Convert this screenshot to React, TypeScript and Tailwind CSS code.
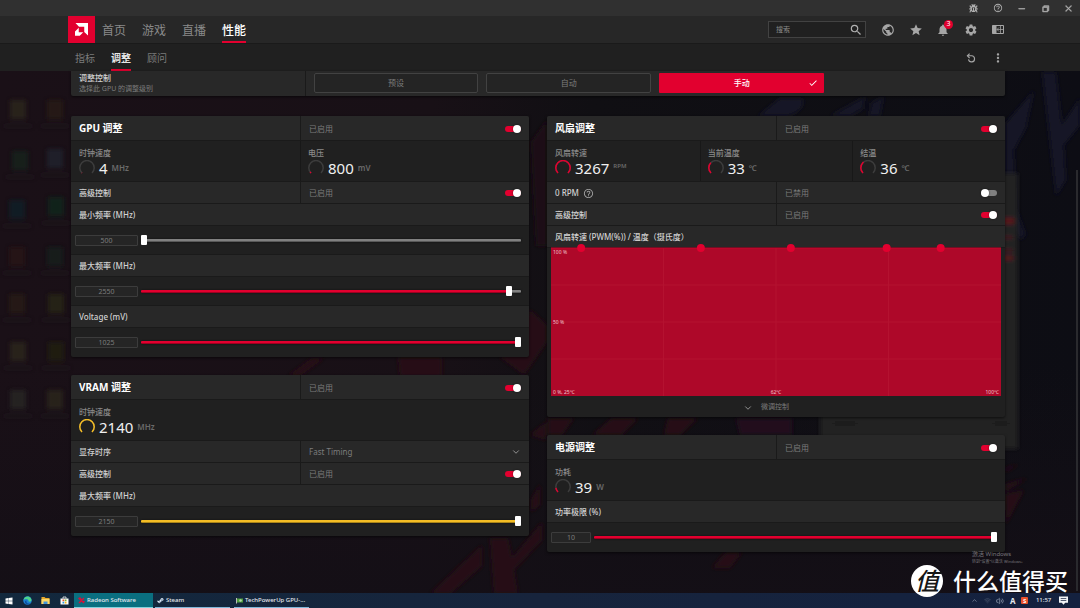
import React, { ReactNode } from "react";
import {
  MdCheck,
  MdHelpOutline,
  MdMoreVert,
  MdNotifications,
  MdPublic,
  MdSearch,
  MdSettings,
  MdStar,
} from "react-icons/md";
import { FaSteamSymbol, FaWindows } from "react-icons/fa";
import {
  VscChromeClose,
  VscChromeMinimize,
  VscChromeRestore,
} from "react-icons/vsc";
import { Bug, ChevronDown, ChevronUp, Volume2, Wifi } from "lucide-react";

const RED = "#e2002f";
const YELLOW = "#f4bd25";

const navItems = ["首页", "游戏", "直播", "性能"];
const subItems = ["指标", "调整", "顾问"];

// share of the chart's width, all points sit at 100 %
const curvePoints = [6.7, 33.3, 53.3, 74.6, 86.6];

const desktopIcons = [
  { x: 10, y: 100, fill: "#2d2a1c" },
  { x: 47, y: 100, fill: "#2c1d16" },
  { x: 12, y: 151, fill: "#12281c" },
  { x: 47, y: 149, fill: "#232630" },
  { x: 9, y: 200, fill: "#10202c" },
  { x: 48, y: 197, fill: "#102c1a" },
  { x: 9, y: 247, fill: "#2c1614" },
  { x: 47, y: 247, fill: "#16201f" },
  { x: 9, y: 294, fill: "#2b1d14" },
  { x: 48, y: 294, fill: "#2b2914" },
  { x: 10, y: 342, fill: "#2d2a1f" },
  { x: 48, y: 342, fill: "#242210" },
  { x: 10, y: 390, fill: "#2b2b26" },
  { x: 47, y: 390, fill: "#2e2a1e" },
];

function Wallpaper() {
  return (
    <svg
      className="absolute inset-0 -z-10 h-full w-full"
      viewBox="0 0 1080 608"
      preserveAspectRatio="none"
      aria-hidden="true"
    >
      <defs>
        <linearGradient id="wall" x1="0" y1="0" x2="1" y2="0">
          <stop offset="0" stopColor="#1a1017" />
          <stop offset="0.4" stopColor="#181016" />
          <stop offset="0.55" stopColor="#100f13" />
          <stop offset="1" stopColor="#0d0d14" />
        </linearGradient>
        <linearGradient id="wallFade" x1="0" y1="0" x2="0" y2="1">
          <stop offset="0.6" stopColor="#140f16" stopOpacity="0" />
          <stop offset="1" stopColor="#140f16" />
        </linearGradient>
        <filter id="soft" x="-20%" y="-20%" width="140%" height="140%">
          <feGaussianBlur stdDeviation="2" />
        </filter>
      </defs>
      <rect width="1080" height="608" fill="url(#wall)" />
      <rect width="1080" height="608" fill="url(#wallFade)" />
      <g filter="url(#soft)">
        <g fill="#131426">
          <path d="M1042 72 1056 72 1062 125 1080 98 1080 125 1064 145 1066 180 1056 196Z" />
          <path d="M1034 90 1026 128 1014 150 1016 208 1026 235 1020 240 1005 215V124Z" />
          <path d="M780 98h22c4 8-4 16-16 18h-28Z" />
          <path d="M830 116 866 96 862 108 884 96 880 116H868L872 104 850 116Z" />
        </g>
        <g fill="#280f19">
          <path d="M398 357h44v20h-42Z" />
          <path d="M500 357 530 310 547 325V342L524 375Z" />
          <path d="M288 376 312 358h12l-24 18Z" />
          <path d="M530 435 546 422V440Z" />
          <path d="M531 500 540 484V505L531 512Z" />
          <path d="M430 594 482 545V566L450 594Z" />
          <path d="M490 538h18l4 20 30-36v18l-28 30 4 24h-24Z" />
          <path d="M548 418 574 418 562 435H548Z" />
          <path d="M592 435 612 418H638L622 435Z" />
          <path d="M668 418H698L680 435H664Z" />
          <path d="M712 568 726 552H742L730 568Z" />
          <path d="M1005 468 1020 464 1005 472ZM1005 484 1028 478 1005 492ZM1005 494 1024 490 1006 524Z" />
        </g>
        <path d="M736 418h56v17h-52Z" fill="#22101f" />
        <path d="M531 142 547 120V246H536Z" fill="#1d0f19" />
      </g>
      <g filter="url(#soft)">
        <rect x="820" y="173" width="198" height="276" fill="#212122" />
        <rect x="1002" y="218" width="12" height="6" fill="#5a161f" />
        <rect x="1002" y="236" width="11" height="3" fill="#45161d" />
        <rect x="1002" y="249" width="11" height="3" fill="#45161d" />
        <rect x="1002" y="256" width="11" height="4" fill="#5a161f" />
        <rect x="834" y="422" width="22" height="3" fill="#161617" />
        <rect x="994" y="422" width="14" height="3" fill="#161617" />
      </g>
      <g filter="url(#soft)" opacity="0.7">
        {desktopIcons.map((d) => (
          <g key={`${d.x}-${d.y}`}>
            <rect x={d.x} y={d.y} width="16" height="19" fill={d.fill} />
            <rect x={d.x - 6} y={d.y + 25} width="28" height="2" fill="#211a20" />
          </g>
        ))}
      </g>
    </svg>
  );
}

function RadeonLogo() {
  return (
    <span className="flex size-[27px] items-center justify-center bg-[#e2002f]">
      <svg className="size-[13px]" viewBox="0 0 26 26" fill="#fff" role="img" aria-label="AMD">
        <path d="M1 0H26V25L18.5 18V7.5H8Z" />
        <path d="M7.5 9.5V18.5H16.5L9.5 25.5H0V17Z" />
      </svg>
    </span>
  );
}

function PanelIcon() {
  return (
    <svg className="h-[9px] w-[12px]" viewBox="0 0 24 18" aria-hidden="true">
      <path d="M1 1h22v16H1z" fill="none" stroke="#a6a6a6" strokeWidth="2" />
      <path d="M1 1h8v16H1z" fill="#a6a6a6" />
      <path d="M10 9h12M14 5l-4 4 4 4M17 2v14" fill="none" stroke="#a6a6a6" strokeWidth="1.500" />
    </svg>
  );
}

function ResetIcon() {
  return (
    <svg className="size-2.5" viewBox="0 0 18 18" fill="none" stroke="#a6a6a6" strokeWidth="2" aria-hidden="true">
      <path d="M3 5h7a5.500 5.500 0 1 1-5.500 6.500" />
      <path d="M6.500 1 2.500 5l4 4" />
    </svg>
  );
}

function WindowBar() {
  return (
    <div className="flex h-4 items-center justify-end bg-[#303030] pr-[7px]">
      <div className="flex w-[104px] items-center justify-between text-[#b0b0b0]">
        <button aria-label="报告问题">
          <Bug className="size-[9px]" strokeWidth={3} />
        </button>
        <button aria-label="帮助">
          <MdHelpOutline className="size-[10px]" />
        </button>
        <button aria-label="最小化">
          <VscChromeMinimize className="size-[9px]" strokeWidth={1} />
        </button>
        <button aria-label="还原">
          <VscChromeRestore className="size-[9px]" strokeWidth={1} />
        </button>
        <button aria-label="关闭">
          <VscChromeClose className="size-[9px]" strokeWidth={1} />
        </button>
      </div>
    </div>
  );
}

function Header() {
  return (
    <header className="flex h-[27px] items-center bg-[#272727] pr-[75px] pl-[68px]">
      <RadeonLogo />
      <nav className="ml-[7px] flex h-full flex-1 gap-4 text-[12px]">
        {navItems.map((item) => (
          <a
            key={item}
            href="#"
            className={
              item === "性能"
                ? "flex items-center border-b-2 border-[#e2002f] pt-1 font-medium text-white"
                : "flex items-center border-b-2 border-transparent pt-1 text-[#8a8a8a]"
            }
          >
            {item}
          </a>
        ))}
      </nav>
      <label className="mr-[15px] flex h-[17px] w-[98px] items-center border border-[#424242] bg-[#202020] pr-0.5 pl-[7px]">
        <input
          type="text"
          aria-label="搜索"
          placeholder="搜索"
          className="w-full min-w-0 bg-transparent pt-0.5 text-[7px] outline-none placeholder:text-[#8a8a8a]"
        />
        <MdSearch className="size-3.5 shrink-0 text-[#b0b0b0]" />
      </label>
      <div className="flex w-[124px] items-center justify-between text-[#a6a6a6]">
        <button aria-label="网络">
          <MdPublic className="size-3.5" />
        </button>
        <button aria-label="收藏">
          <MdStar className="size-3.5" />
        </button>
        <button aria-label="通知" className="relative">
          <MdNotifications className="size-3.5" />
          <span className="absolute -top-[3px] -right-[3px] flex size-[9px] items-center justify-center rounded-full bg-[#e2002f] text-[7px] text-white">
            3
          </span>
        </button>
        <button aria-label="设置">
          <MdSettings className="size-3.5" />
        </button>
        <button aria-label="侧栏" className="flex w-3.5 justify-center">
          <PanelIcon />
        </button>
      </div>
    </header>
  );
}

function SubHeader() {
  return (
    <div className="flex h-7 items-center border-t border-[#1a1a1a] bg-[#202020] pr-[75px] pl-[75px]">
      <nav className="flex h-full flex-1 gap-4 text-[10px]">
        {subItems.map((item) => (
          <a
            key={item}
            href="#"
            className={
              item === "调整"
                ? "flex items-center border-b-2 border-[#e2002f] pt-1 font-bold text-[#e6e6e6]"
                : "flex items-center border-b-2 border-transparent pt-1 text-[#7c7c7c]"
            }
          >
            {item}
          </a>
        ))}
      </nav>
      <div className="flex items-center gap-[15px] text-[#a6a6a6]">
        <button aria-label="重置">
          <ResetIcon />
        </button>
        <button aria-label="更多">
          <MdMoreVert className="size-3.5" />
        </button>
      </div>
    </div>
  );
}

function Card({ children }: { children: ReactNode }) {
  return (
    <section className="overflow-hidden rounded-xs bg-[#202020] shadow-[0_1px_3px_rgba(0,0,0,0.6)]">
      {children}
    </section>
  );
}

function Toggle({ label, on = true }: { label: string; on?: boolean }) {
  return (
    <input
      type="checkbox"
      aria-label={label}
      defaultChecked={on}
      className="flex h-1.5 w-4 appearance-none items-center rounded-full bg-[#808080] before:size-2 before:shrink-0 before:rounded-full before:bg-white before:shadow-[0_0_2px_rgba(0,0,0,0.6)] before:content-[''] checked:justify-end checked:bg-[#e2002f]"
    />
  );
}

function CardHeader({ title }: { title: string }) {
  return (
    <div className="grid h-[25px] grid-cols-2 border-b border-[#1a1a1a] bg-[#282828]">
      <h2 className="flex items-center px-2 pt-px text-[10px] font-bold text-white">{title}</h2>
      <div className="flex items-center justify-between border-l border-[#1a1a1a] px-2 pt-px">
        <span className="text-[8px] text-[#7c7c7c]">已启用</span>
        <Toggle label={title} />
      </div>
    </div>
  );
}

function Row({ label, help, children }: { label: string; help?: boolean; children?: ReactNode }) {
  return (
    <div className="grid h-[22px] grid-cols-2 border-b border-[#1a1a1a] bg-[#282828] text-[8px]">
      <div className="flex items-center gap-1 px-2 pt-px font-medium whitespace-nowrap text-[#d2d2d2]">
        {label}
        {help && <MdHelpOutline className="size-[11px] text-[#a0a0a0]" />}
      </div>
      {children && (
        <div className="flex items-center justify-between border-l border-[#1a1a1a] px-2 pt-px text-[#7c7c7c]">
          {children}
        </div>
      )}
    </div>
  );
}

function SwitchRow({ label, on = true, help }: { label: string; on?: boolean; help?: boolean }) {
  return (
    <Row label={label} help={help}>
      <span>{on ? "已启用" : "已禁用"}</span>
      <Toggle label={label} on={on} />
    </Row>
  );
}

interface StatProps {
  label: string;
  value: number;
  unit: string;
  fill: number;
  color?: string;
  smallUnit?: boolean;
}

function Stat({ label, value, unit, fill, color = RED, smallUnit }: StatProps) {
  const arc = "M3 13A7.200 7.200 0 1 1 13 13";
  return (
    <div className="flex flex-col border-l border-[#181818] px-[7px] pt-[7px] first:border-transparent">
      <span className="text-[8px] leading-[10px] font-medium text-[#8a8a8a]">{label}</span>
      <div className="flex items-center gap-1">
        <svg className="size-4" viewBox="0 0 16 16" fill="none" strokeWidth="1.5" aria-hidden="true">
          <path d={arc} stroke="#3c3c3c" />
          <path d={arc} stroke={color} pathLength={100} strokeDasharray={`${fill} 200`} />
        </svg>
        <span className="text-[15px] leading-5 text-[#f0f0f0]">{value}</span>
        <span
          className={
            smallUnit
              ? "pb-1 text-[6px] font-semibold text-[#6a6a6a]"
              : "text-[8px] font-semibold text-[#6a6a6a]"
          }
        >
          {unit}
        </span>
      </div>
    </div>
  );
}

interface SliderProps {
  label: string;
  min: number;
  max: number;
  value: number;
  color?: string;
  narrow?: boolean;
}

function SliderRow({ label, min, max, value, color = RED, narrow }: SliderProps) {
  const fill = ((value - min) / (max - min)) * 100;
  return (
    <>
      <Row label={label} />
      <div className="flex h-[29px] items-center gap-[3px] border-b border-[#1a1a1a] pt-px pr-2 pl-1 last:border-transparent">
        <input
          type="text"
          aria-label={label}
          defaultValue={value}
          className={
            narrow
              ? "h-[11px] w-10 rounded-[1px] border border-[#3c3c3c] bg-[#252525] text-center text-[7px] text-[#7c7c7c]"
              : "h-[11px] w-[63px] rounded-[1px] border border-[#3c3c3c] bg-[#252525] text-center text-[7px] text-[#7c7c7c]"
          }
        />
        <input
          type="range"
          aria-label={label}
          min={min}
          max={max}
          defaultValue={value}
          style={{
            backgroundImage: `linear-gradient(to right, ${color} ${fill}%, #808080 ${fill}%)`,
          }}
          className="h-[3px] min-w-0 flex-1 appearance-none rounded-[1px] border-b border-black/30 shadow-[0_0_2px_rgba(0,0,0,0.7)] [&::-webkit-slider-thumb]:h-2.5 [&::-webkit-slider-thumb]:w-1.5 [&::-webkit-slider-thumb]:appearance-none [&::-webkit-slider-thumb]:rounded-[1px] [&::-webkit-slider-thumb]:bg-white"
        />
      </div>
    </>
  );
}

function FanCurve() {
  return (
    <div className="relative mx-1 flex h-[148px] flex-col justify-between bg-[#ae0829] px-0.5 pt-px text-[5px] leading-[7px] text-[#efc4cc]">
      <svg className="absolute inset-0 h-full w-full overflow-visible" aria-hidden="true">
        {["25%", "50%", "75%"].map((p) => (
          <g key={p} stroke="#b41230" strokeWidth="1">
            <line x1={p} x2={p} y1="0" y2="100%" />
            <line x1="0" x2="100%" y1={p} y2={p} />
          </g>
        ))}
        <line x1="0" x2="100%" y1="0" y2="0" stroke="#c8052c" />
        {curvePoints.map((x) => (
          <circle key={x} cx={`${x}%`} cy="0" r="4" fill={RED} />
        ))}
      </svg>
      <span className="relative">100 %</span>
      <span className="relative">50 %</span>
      <div className="relative grid grid-cols-3">
        <span>0 %, 25℃</span>
        <span className="text-center">62℃</span>
        <span className="text-right">100℃</span>
      </div>
    </div>
  );
}

function TuningControl() {
  return (
    <section className="grid h-[25px] grid-cols-4 rounded-b-xs bg-[#282828] shadow-[0_1px_3px_rgba(0,0,0,0.6)]">
      <div className="flex flex-col px-2 pt-px">
        <span className="text-[8px] leading-[11px] font-medium text-[#d2d2d2]">调整控制</span>
        <span className="text-[7px] leading-[11px] text-[#7c7c7c]">选择此 GPU 的调整级别</span>
      </div>
      <div className="col-span-3 grid grid-cols-4 gap-2 border-l border-[#1a1a1a] px-2 pt-0.5 pb-[3px] text-[8px]">
        <button className="rounded-xs border border-[#424242] bg-[#242424] text-[#7c7c7c]">预设</button>
        <button className="rounded-xs border border-[#424242] bg-[#242424] text-[#7c7c7c]">自动</button>
        <button className="grid grid-cols-[1fr_auto_1fr] items-center rounded-[1px] bg-[#e2002f] px-1.5 font-medium text-white">
          <span className="col-start-2">手动</span>
          <MdCheck className="size-2.5 justify-self-end" />
        </button>
      </div>
    </section>
  );
}

function Taskbar() {
  return (
    <footer className="flex h-[15px] items-stretch bg-linear-to-r from-[#12283d] via-[#17243c] to-[#14213f] text-[6px] font-medium text-[#e4e8ee]">
      <div className="flex w-[74px] items-center justify-between pr-[5px] pl-[5px]">
        <FaWindows className="size-2 text-white" />
        <svg className="size-[9px]" viewBox="0 0 18 18" aria-label="Edge">
          <circle cx="9" cy="9" r="8.500" fill="#1b7fd0" />
          <path d="M1 8C2 2 8 0 12 1.500c5 2 6 7 4 9-2 1.500-5 1-5-1C11 6 5 4 1 8Z" fill="#4fd48a" />
          <path d="M7 9c-1 4 2 7 7 6-4 4-10 2-10-3 0-2 1-3 3-3Z" fill="#0c4f9c" />
        </svg>
        <svg className="size-[9px]" viewBox="0 0 18 18" aria-label="Explorer">
          <path d="M1 2h6l2 2h8v12H1z" fill="#e5a72c" />
          <path d="M1 6h16v10H1z" fill="#fbd767" />
          <path d="M5 11h8v5H5z" fill="#3f93d8" />
        </svg>
        <svg className="size-[9px]" viewBox="0 0 18 18" aria-label="Store">
          <path d="M6 5V2h6v3" fill="none" stroke="#fff" strokeWidth="1.500" />
          <path d="M1 5h16v12H1z" fill="#fff" />
          <path d="M5 7h3.500v3.500H5z" fill="#e8502a" />
          <path d="M9.500 7H13v3.500H9.500z" fill="#7db72f" />
          <path d="M5 11.500h3.500V15H5z" fill="#2a9be0" />
          <path d="M9.500 11.500H13V15H9.500z" fill="#f5b81c" />
        </svg>
      </div>
      <button className="flex w-[79px] items-center gap-0.5 border-b border-[#7fd3de] bg-[#0a6f80] px-1">
        <svg className="size-[7px]" viewBox="0 0 14 14" aria-hidden="true">
          <path d="M1 2 12 12M12 2 2 12M3 1l4 5M11 8l2 2" stroke="#d4123a" strokeWidth="3" />
        </svg>
        Radeon Software
      </button>
      <button className="ml-0.5 flex w-[75px] items-center gap-0.5 border-b border-[#7fb6d8] px-0.5">
        <FaSteamSymbol className="size-[7px] text-[#d8e6f5]" />
        Steam
      </button>
      <button className="ml-1 flex w-[75px] items-center gap-0.5 border-b border-[#7fb6d8] px-0.5">
        <svg className="size-[7px]" viewBox="0 0 14 14" aria-hidden="true">
          <path d="M0 2h2v11H0z" fill="#bbb" />
          <path d="M2 3h12v8H2z" fill="#4f9b3d" />
          <circle cx="9" cy="7" r="2.500" fill="#b9dcae" />
        </svg>
        TechPowerUp GPU-...
      </button>
      <div className="ml-auto flex w-[109px] items-center justify-between pr-3">
        <ChevronUp className="size-[7px] text-[#9aa6b8]" />
        <Wifi className="size-[7px] text-[#4d5a70]" />
        <Volume2 className="size-2 text-[#9aa6b8]" />
        <span className="text-[8px] leading-none font-bold">A</span>
        <span className="flex size-[7px] items-center justify-center rounded-[1px] bg-[#e8502a] text-[6px] leading-none font-bold text-white">
          S
        </span>
        <span className="px-0.5">11:57</span>
        <svg className="size-[9px]" viewBox="0 0 16 16" aria-label="通知">
          <path d="M0 1h16v11h-5l-3 3.500L5 12H0z" fill="#f2f4f8" />
          <path d="M3 4.500h10M3 8h10" stroke="#14213f" strokeWidth="1.300" />
        </svg>
      </div>
    </footer>
  );
}

function Watermark() {
  return (
    <div className="absolute right-3 bottom-[11px] flex items-center gap-2.5 text-white">
      <span className="flex size-8 items-center justify-center rounded-full bg-white text-[24px] leading-none font-medium text-[#161616] italic">
        值
      </span>
      <span className="text-[23px] leading-6 font-medium">什么值得买</span>
    </div>
  );
}

export default function App() {
  return (
    <div className="relative isolate flex min-h-screen flex-col font-['Noto_Sans','Noto_Sans_CJK_SC',sans-serif]">
      <Wallpaper />
      <WindowBar />
      <Header />
      <SubHeader />

      <main className="flex flex-1 flex-col gap-5 pr-[75px] pl-[71px]">
        <TuningControl />

        <div className="grid grid-cols-2 items-start gap-[18px]">
          <div className="flex flex-col gap-[18px]">
            {/* GPU */}
            <Card>
              <CardHeader title="GPU 调整" />
              <div className="grid h-[41px] grid-cols-2 border-b border-[#1a1a1a]">
                <Stat label="时钟速度" value={4} unit="MHz" fill={1} />
                <Stat label="电压" value={800} unit="mV" fill={4} />
              </div>
              <SwitchRow label="高级控制" />
              <SliderRow label="最小频率 (MHz)" min={500} max={2600} value={500} />
              <SliderRow label="最大频率 (MHz)" min={500} max={2600} value={2550} />
              <SliderRow label="Voltage (mV)" min={700} max={1025} value={1025} />
            </Card>

            {/* VRAM */}
            <Card>
              <CardHeader title="VRAM 调整" />
              <div className="grid h-[41px] grid-cols-1 border-b border-[#1a1a1a]">
                <Stat label="时钟速度" value={2140} unit="MHz" fill={100} color={YELLOW} />
              </div>
              <Row label="显存时序">
                <select aria-label="显存时序" className="flex-1 appearance-none bg-transparent outline-none">
                  <option>Fast Timing</option>
                </select>
                <ChevronDown className="size-2.5 text-[#a6a6a6]" />
              </Row>
              <SwitchRow label="高级控制" />
              <SliderRow label="最大频率 (MHz)" min={2000} max={2150} value={2150} color={YELLOW} />
            </Card>
          </div>

          <div className="flex flex-col gap-[18px]">
            {/* Fan */}
            <Card>
              <CardHeader title="风扇调整" />
              <div className="grid h-[41px] grid-cols-3 border-b border-[#1a1a1a]">
                <Stat label="风扇转速" value={3267} unit="RPM" fill={100} smallUnit />
                <Stat label="当前温度" value={33} unit="℃" fill={33} />
                <Stat label="结温" value={36} unit="℃" fill={36} />
              </div>
              <SwitchRow label="0 RPM" on={false} help />
              <SwitchRow label="高级控制" />
              <Row label="风扇转速 (PWM(%)) / 温度（摄氏度）" />
              <FanCurve />
              <button className="flex h-[21px] w-full items-center justify-center gap-2 pt-0.5 pr-5 text-[7px] text-[#7c7c7c]">
                <ChevronDown className="size-2.5 text-[#a6a6a6]" />
                微调控制
              </button>
            </Card>

            {/* Power */}
            <Card>
              <CardHeader title="电源调整" />
              <div className="grid h-[41px] grid-cols-1 border-b border-[#1a1a1a]">
                <Stat label="功耗" value={39} unit="W" fill={14} />
              </div>
              <SliderRow label="功率极限 (%)" min={-10} max={10} value={10} narrow />
            </Card>
          </div>
        </div>
      </main>

      <Taskbar />

      <div className="absolute top-[170px] right-0.5 bottom-[17px] w-0.5 bg-[#2a2a2e]" />
      <div className="absolute right-[55px] bottom-[43px] flex flex-col text-[#77757b]">
        <span className="text-[6px] leading-[7px]">激活 Windows</span>
        <span className="text-[4px] leading-[7px]">转到“设置”以激活 Windows。</span>
      </div>
      <Watermark />
    </div>
  );
}
